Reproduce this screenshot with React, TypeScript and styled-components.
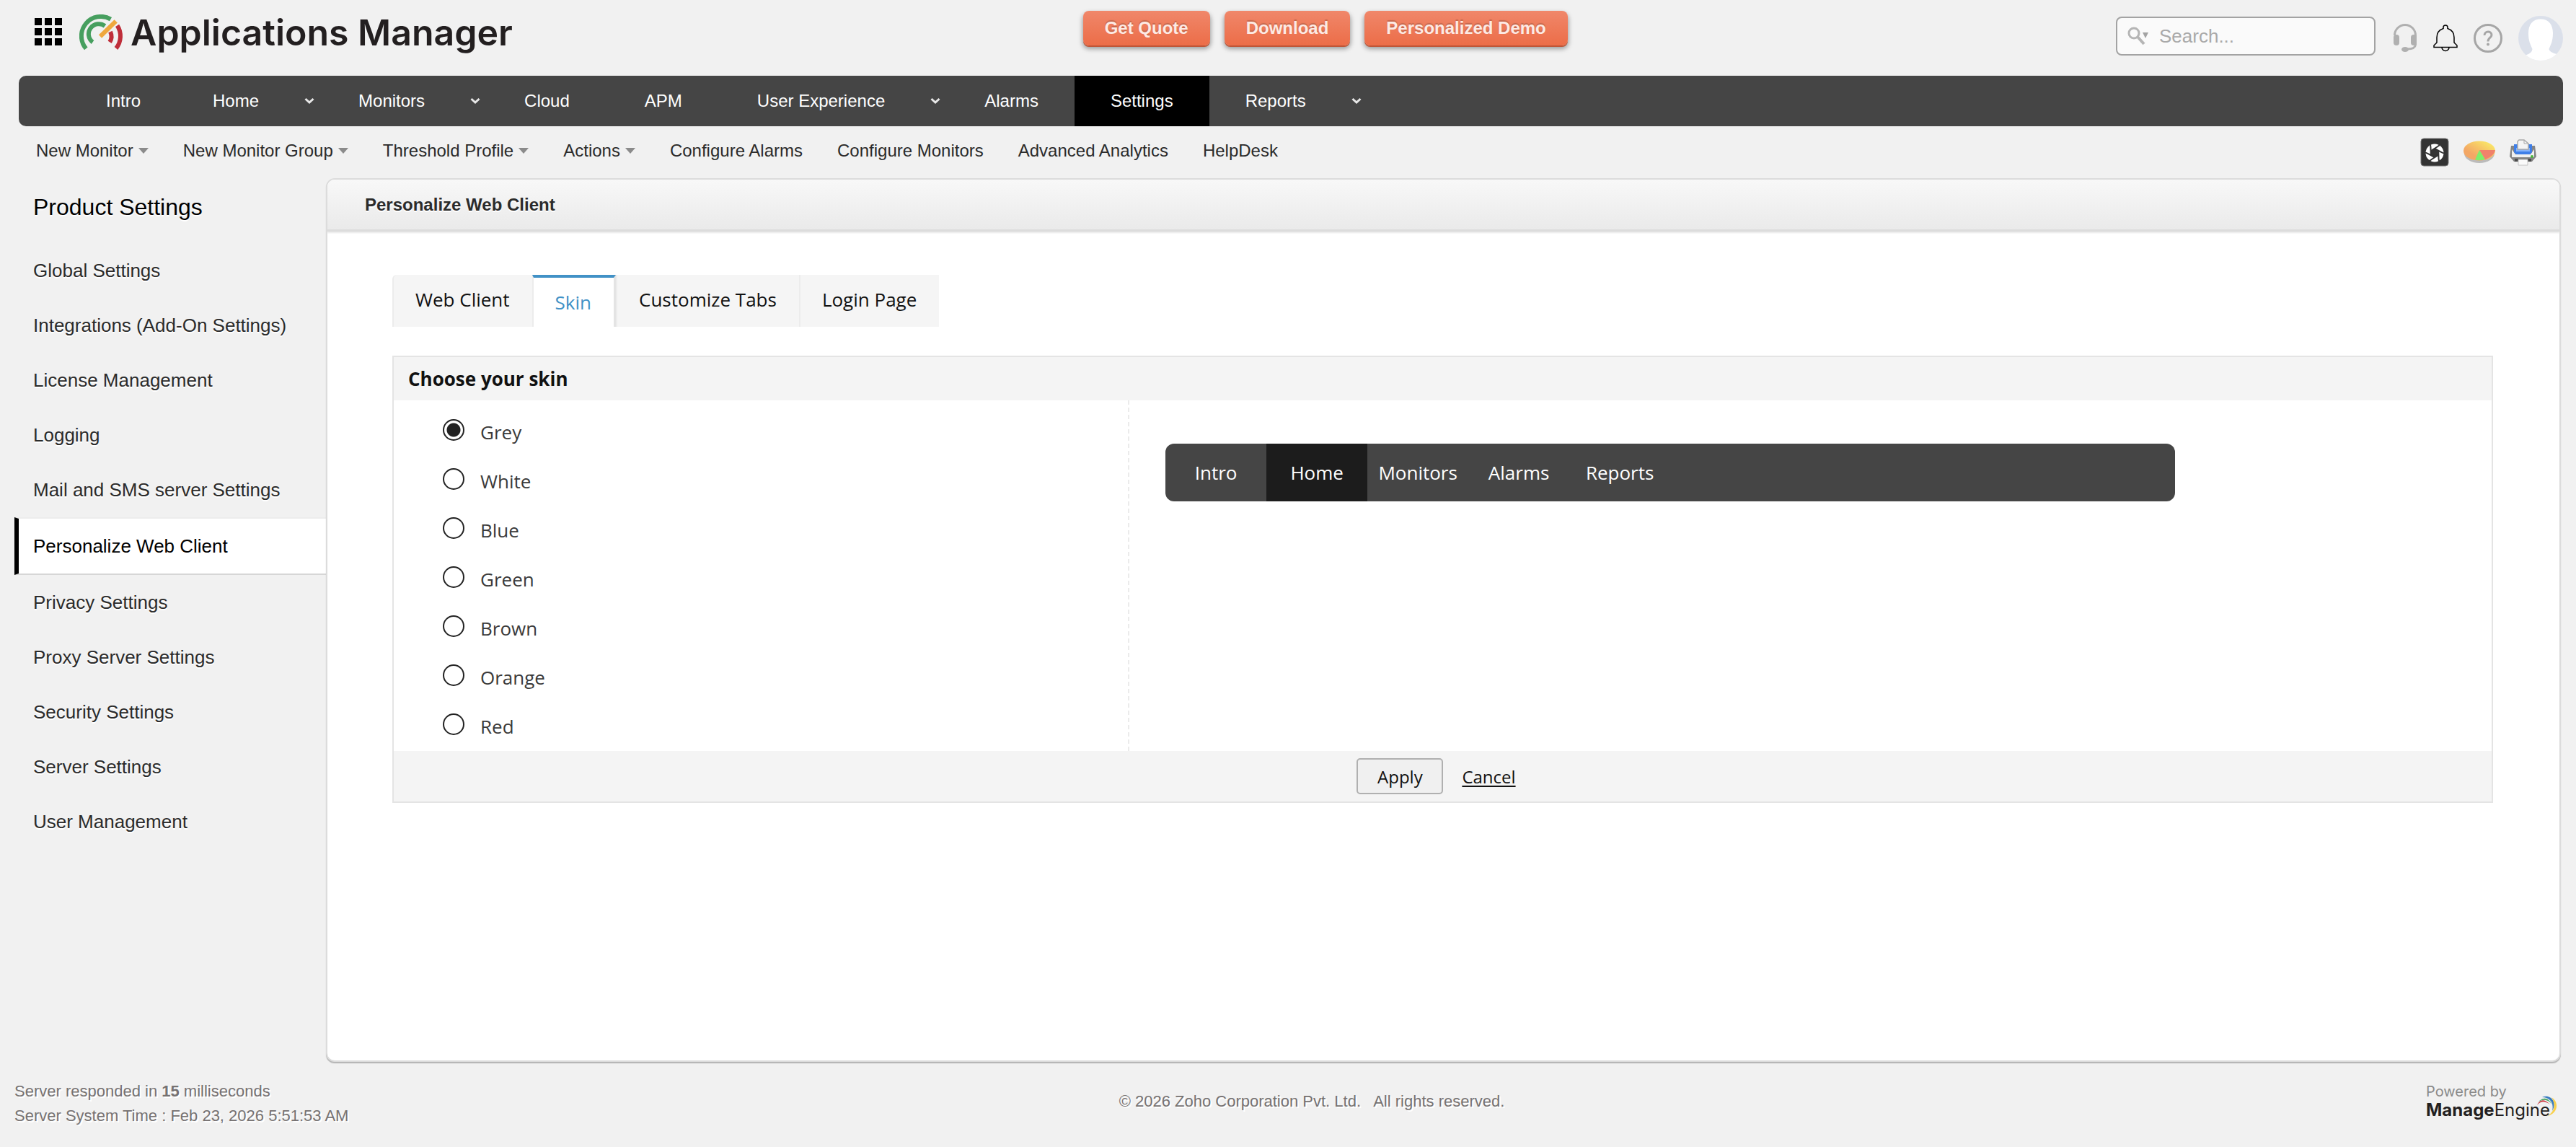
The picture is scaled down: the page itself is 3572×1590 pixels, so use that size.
import React, { useState } from "react";
import styled, { createGlobalStyle, css } from "styled-components";

const sans = `"Liberation Sans", Arial, Helvetica, sans-serif`;
const open = `"Open Sans", "Noto Sans", sans-serif`;
const brand = `Inter, "Open Sans", sans-serif`;

const GlobalStyle = createGlobalStyle`
  *, *::before, *::after { box-sizing: border-box; }
  body { margin: 0; background: #f1f1f1; color: #2b2b2b; font-family: ${sans}; font-size: 24px; }
  a { color: inherit; text-decoration: none; }
  button { font: inherit; color: inherit; cursor: pointer; }
  ul { list-style: none; margin: 0; padding: 0; }
  svg { display: block; }
`;

const Page = styled.div`
  min-height: 100vh;
  display: flex;
  flex-direction: column;
`;

/* ---------- header ---------- */

const Header = styled.header`
  display: grid;
  grid-template-columns: 42% auto 1fr;
  align-items: start;
  height: 105px;
  padding-right: 18px;
`;

const HeaderLeft = styled.div`
  display: flex;
  align-items: flex-start;
  padding: 20px 0 0 48px;
`;

const IconButton = styled.button`
  display: block;
  padding: 0;
  border: 0;
  background: none;
`;

const AppsButton = styled(IconButton)`
  padding-top: 5px;
  margin-right: 24px;
`;

const ProductName = styled.h1`
  margin: 0 0 0 10px;
  font: 600 50px/50px ${brand};
  color: #231f20;
  white-space: nowrap;
`;

const PromoBar = styled.div`
  display: flex;
  gap: 20px;
  padding-top: 15px;
  margin-left: 9px;
`;

const PromoButton = styled.a`
  height: 48px;
  padding: 0 30px;
  border-radius: 8px;
  background: linear-gradient(#f0876a, #ec6d48);
  box-shadow: 0 2px 0 #bf5537, 0 4px 6px 1px rgba(0, 0, 0, 0.35);
  color: #fdeae4;
  font-weight: bold;
  line-height: 48px;
  text-shadow: 0 -2px 1px #c4684e;
  white-space: nowrap;
`;

const Tools = styled.div`
  display: flex;
  justify-content: flex-end;
  align-items: center;
  padding-top: 22px;
`;

const SearchBox = styled.label`
  display: flex;
  align-items: center;
  gap: 14px;
  width: 360px;
  height: 54px;
  margin: 0 24px 6px 0;
  padding: 0 14px;
  border: 2px solid #a3a3a3;
  border-radius: 8px;
  background: #fafafa;
`;

const SearchInput = styled.input`
  flex: 1;
  min-width: 0;
  padding: 0;
  border: 0;
  outline: 0;
  background: none;
  font: 26px/32px ${sans};
  &::placeholder { color: #a9a9a9; opacity: 1; }
`;

const ToolIcons = styled.div`
  display: flex;
  align-items: center;
  gap: 22px;
`;

/* ---------- navigation ---------- */

const MainNav = styled.nav`
  margin: 0 18px 0 26px;
  height: 70px;
  padding-left: 71px;
  border-radius: 10px;
  background: #454545;
  color: #fff;
`;

const MainList = styled.ul`
  display: flex;
  height: 100%;
`;

const MainItem = styled.li<{ $roomy?: boolean }>`
  display: flex;
  ${(p) => p.$roomy && css`min-width: 160px; justify-content: center;`}
`;

const MainLink = styled.a<{ $active?: boolean }>`
  padding: 0 50px;
  line-height: 70px;
  background: ${(p) => (p.$active ? "#000" : "transparent")};
`;

const ChevronButton = styled(IconButton)`
  width: 38px;
  padding-left: 12px;
`;

const SubNav = styled.nav`
  display: flex;
  justify-content: space-between;
  align-items: center;
  height: 72px;
  padding: 0 55px 0 50px;
`;

const SubList = styled.ul`
  display: flex;
  gap: 48px;
  padding-bottom: 4px;
  line-height: 32px;
`;

const SubLink = styled.a`
  display: flex;
  align-items: center;
  gap: 7px;
`;

const Caret = styled.span`
  border: 7px solid transparent;
  border-top: 8px solid #8b8b8b;
  border-bottom: 0;
`;

const SubIcons = styled.div`
  display: flex;
  align-items: center;
  gap: 20px;
`;

/* ---------- body ---------- */

const Body = styled.div`
  flex: 1;
  display: flex;
  padding: 0 21px 0 20px;
`;

const Sidebar = styled.aside`
  width: 432px;
  text-shadow: 0 2px 0 #fff;
`;

const SidebarTitle = styled.h2`
  margin: 0 0 10px;
  padding-left: 26px;
  font: 32px/80px ${sans};
  color: #000;
`;

const SideLink = styled.a<{ $active?: boolean }>`
  display: block;
  padding-left: 26px;
  font-size: 26px;
  line-height: 76px;
  ${(p) =>
    p.$active &&
    css`
      padding-left: 20px;
      border: solid;
      border-width: 2px 0 2px 6px;
      border-color: #ececec #fff #d6d6d6 #000;
      background: #fff;
      color: #000;
    `}
`;

const Panel = styled.main`
  flex: 1;
  min-width: 0;
  border: 2px solid #dcdcdc;
  border-radius: 12px;
  background: #fff;
  box-shadow: 0 2px 1px #b5b5b5;
  overflow: hidden;
`;

const PanelTitle = styled.h2`
  margin: 0;
  height: 72px;
  padding-left: 52px;
  border-bottom: 3px solid #dcdcdc;
  box-shadow: 0 2px 2px #e8e8e8;
  background: linear-gradient(#f8f8f8, #eaeaea);
  font: bold 24px/70px ${sans};
  text-shadow: 0 2px 0 #fff;
`;

const PanelContent = styled.div`
  padding: 60px 92px 90px 90px;
  font-family: ${open};
  font-size: 26px;
`;

const Tabs = styled.div`
  display: flex;
  height: 72px;
  margin-bottom: 40px;
`;

const Tab = styled.button<{ $active?: boolean }>`
  display: flex;
  align-items: center;
  padding: 0 31px 4px 30px;
  border: 0;
  border-left: 2px solid #ececec;
  background: #f5f5f5;
  color: #111;
  &:first-child { border-top-left-radius: 6px; }
  ${(p) =>
    p.$active &&
    css`
      padding-bottom: 0;
      border-top: 4px solid #4191c6;
      border-right: 3px solid #e4e4e4;
      background: #fff;
      color: #4191c6;
    `}
`;

const Card = styled.form`
  border: 2px solid #e4e4e4;
`;

const CardTitle = styled.h3`
  margin: 0;
  padding-left: 20px;
  background: #f4f4f4;
  color: #111;
  font: bold 26px/60px ${open};
`;

const CardBody = styled.div`
  display: flex;
`;

const Choices = styled.div`
  width: 35%;
  padding: 10px 0 0 68px;
`;

const Choice = styled.label`
  display: flex;
  align-items: center;
  gap: 22px;
  height: 68px;
  color: #3a3a3a;
`;

const Radio = styled.input`
  appearance: none;
  width: 30px;
  height: 30px;
  margin: 0 0 6px;
  border: 2px solid #222;
  border-radius: 50%;
  background: #fff;
  &:checked { background: radial-gradient(circle, #222 9px, #fff 10px); }
`;

const PreviewPane = styled.div`
  flex: 1;
  padding: 60px 50px;
  border-left: 2px dashed #ebebeb;
`;

const Preview = styled.div`
  display: flex;
  max-width: 1400px;
  border-radius: 12px;
  background: #454545;
  color: #fff;
  line-height: 80px;
  overflow: hidden;
`;

const PreviewTab = styled.span<{ $active?: boolean }>`
  width: 140px;
  text-align: center;
  background: ${(p) => (p.$active ? "#1c1c1c" : "transparent")};
`;

const Actions = styled.div`
  display: flex;
  justify-content: center;
  align-items: center;
  gap: 26px;
  height: 70px;
  padding-right: 18px;
  background: #f4f4f4;
  color: #111;
  font-size: 24px;
`;

const ApplyButton = styled.button`
  width: 120px;
  height: 50px;
  padding: 0;
  border: 2px solid #b0b0b0;
  border-radius: 5px;
  background: #f0f0f0;
`;

const CancelLink = styled.a`
  text-decoration: underline;
  text-decoration-thickness: 2px;
  text-underline-offset: 3px;
`;

/* ---------- footer ---------- */

const Footer = styled.footer`
  display: grid;
  grid-template-columns: 1fr auto 1fr;
  height: 118px;
  padding: 24px 24px 0 20px;
  font-size: 22px;
  line-height: 34px;
  color: #767272;
  text-shadow: 2px 2px 0 #fff;
`;

const Copyright = styled.p`
  margin: 0;
  padding-top: 14px;
  padding-left: 70px;
  white-space: pre;
`;

const PoweredBy = styled.a`
  position: relative;
  justify-self: end;
  width: 184px;
  padding-top: 4px;
  font: 20px/26px ${brand};
  color: #8a8a8a;
  text-shadow: none;
`;

const EngineName = styled.span`
  display: block;
  font-size: 24px;
  color: #231f20;
`;

const Swoosh = styled.svg`
  position: absolute;
  right: 2px;
  top: 23px;
`;

/* ---------- drawings ---------- */

const AppsIcon = () => (
  <svg width="38" height="38" viewBox="0 0 38 38" aria-hidden="true">
    {[0, 14, 28].map((y) => [0, 14, 28].map((x) => <rect key={`${x}-${y}`} x={x} y={y} width="10" height="10" />))}
  </svg>
);

const Gauge = () => (
  <svg width="61" height="50" viewBox="0 0 61 50" fill="none" strokeWidth="6" aria-hidden="true">
    <path stroke="#479f5f" d="M9.3 47.4A27 27 0 0 1 43.5 6.6M18.5 38.5A14 14 0 0 1 35.5 16" />
    <path stroke="#bf2e3a" d="M52.6 15.3A27 27 0 0 1 51 47M43 24A15 15 0 0 1 42.2 38.4" />
    <path stroke="#efa83e" d="M29 30.5L50.7 9.3" />
  </svg>
);

const SearchIcon = () => (
  <svg width="30" height="26" viewBox="0 0 30 26" aria-hidden="true">
    <circle cx="9" cy="9" r="7" fill="none" stroke="#b5b5b5" strokeWidth="3" />
    <path d="M14 14l9 10" stroke="#b5b5b5" strokeWidth="4" />
    <path d="M21 8h8l-4 8z" fill="#a3a3a3" />
  </svg>
);

const Headset = () => (
  <svg width="34" height="40" viewBox="0 0 34 40" aria-hidden="true">
    <path d="M2.5 16A14.5 14.5 0 0 1 31.5 16V29Q31 35 20 35" fill="none" stroke="#b0b0b0" strokeWidth="3" />
    <rect x="1" y="15" width="8" height="15" rx="4" fill="#b0b0b0" />
    <rect x="25" y="15" width="8" height="15" rx="4" fill="#b0b0b0" />
    <ellipse cx="17" cy="35.5" rx="5" ry="3.5" fill="#b0b0b0" />
  </svg>
);

const Bell = () => (
  <svg width="34" height="38" viewBox="0 0 34 38" fill="none" stroke="#000" strokeWidth="1.5" aria-hidden="true">
    <path d="M14 5.5V4A3 3 0 0 1 20 4V5.5C26 7.5 29 12 29 18V25L33 29V31.5H1V29L5 25V18C5 12 8 7.5 14 5.5Z" />
    <path d="M12 31.5A5 5 0 0 0 22 31.5" />
  </svg>
);

const Help = () => (
  <svg width="40" height="40" viewBox="0 0 40 40" fill="none" stroke="#a6a6a6" aria-hidden="true">
    <circle cx="20" cy="20" r="18.5" strokeWidth="3" />
    <path d="M15 16C15 9.5 25 9.5 25 15.5C25 19.5 20 19 20 24.5" strokeWidth="3" />
    <circle cx="20" cy="28.5" r="2" fill="#a6a6a6" stroke="none" />
  </svg>
);

const Avatar = () => (
  <svg width="62" height="62" viewBox="0 0 62 62" aria-hidden="true">
    <clipPath id="avatar-round"><circle cx="31" cy="31" r="31" /></clipPath>
    <g clipPath="url(#avatar-round)">
      <rect width="62" height="62" fill="#dbe0ea" />
      <path fill="#fff" d="M31 4.5C42 4.5 48 12 48 24C48 35 45 40 42.5 46Q43 51 55 53.5L62 58V62H0V58L10 54.5Q19 52 19.5 46C17 40 14 35 14 24C14 12 20 4.5 31 4.5Z" />
    </g>
  </svg>
);

const Chevron = () => (
  <svg width="16" height="10" viewBox="0 0 16 10" aria-hidden="true">
    <path d="M2.5 2L8 7L13.5 2" fill="none" stroke="#e8e8e8" strokeWidth="3" />
  </svg>
);

const Shutter = () => (
  <svg width="40" height="40" viewBox="0 0 40 40" aria-hidden="true">
    <rect x="1" y="1" width="38" height="38" rx="4" fill="#333" stroke="#777" />
    <circle cx="20" cy="21" r="12.5" fill="#fff" />
    <path d="M20 15L25.2 18V24L20 27L14.8 24V18Z" fill="#333" />
    <g stroke="#333" strokeWidth="2">
      {[0, 60, 120, 180, 240, 300].map((a) => (
        <path key={a} d="M14.8 18L24 12.3L27 10" transform={`rotate(${a} 20 21)`} />
      ))}
    </g>
  </svg>
);

const Pie = () => (
  <svg width="44" height="32" viewBox="0 0 44 32" aria-hidden="true">
    <defs>
      <linearGradient id="pie-top" x1="0" y1="1" x2="1" y2="0">
        <stop offset="0.3" stopColor="#f3a765" />
        <stop offset="1" stopColor="#fbf468" />
      </linearGradient>
    </defs>
    <ellipse cx="22" cy="17.5" rx="21" ry="13.5" fill="#bbb" />
    <ellipse cx="22" cy="14" rx="22" ry="13.5" fill="url(#pie-top)" />
    <path d="M22 13H44Q43 21 30 26Z" fill="#f0826b" />
    <path d="M22 13L30 26Q23 28 16 26.5Z" fill="#7eee6c" />
  </svg>
);

const Printer = () => (
  <svg width="37" height="37" viewBox="0 0 37 37" aria-hidden="true">
    <path d="M2 9H6V16H31V9H35L37 24L31 31H6L0 24Z" fill="#858585" />
    <path d="M3 14L8 21H29L34 14V25H3Z" fill="#f0f0f0" />
    <path d="M6 7H31V18L28 21H9L6 18Z" fill="#3f7fe8" />
    <path d="M9 12H28V17H9Z" fill="#85b3fa" />
    <path d="M11 3L13 1H20L26 6V14H11Z" fill="#f4f4f4" stroke="#a8a8a8" strokeWidth="1.5" />
    <path d="M20 1V6H26" fill="none" stroke="#a8a8a8" />
    <path d="M7 27H30V31H7Z" fill="#4d4d4d" />
    <path d="M12 28H25V36H12Z" fill="#fafafa" stroke="#c4c4c4" />
    <circle cx="31" cy="24" r="2" fill="#49b53c" />
  </svg>
);

/* ---------- content ---------- */

const mainNav = [
  { label: "Intro" },
  { label: "Home", menu: true },
  { label: "Monitors", menu: true },
  { label: "Cloud" },
  { label: "APM", roomy: true },
  { label: "User Experience", menu: true },
  { label: "Alarms" },
  { label: "Settings", active: true },
  { label: "Reports", menu: true },
];

const subNav = [
  { label: "New Monitor", menu: true },
  { label: "New Monitor Group", menu: true },
  { label: "Threshold Profile", menu: true },
  { label: "Actions", menu: true },
  { label: "Configure Alarms" },
  { label: "Configure Monitors" },
  { label: "Advanced Analytics" },
  { label: "HelpDesk" },
];

const settings = [
  "Global Settings",
  "Integrations (Add-On Settings)",
  "License Management",
  "Logging",
  "Mail and SMS server Settings",
  "Personalize Web Client",
  "Privacy Settings",
  "Proxy Server Settings",
  "Security Settings",
  "Server Settings",
  "User Management",
];

const skins = ["Grey", "White", "Blue", "Green", "Brown", "Orange", "Red"];

export default function App() {
  const [skin, setSkin] = useState("Grey");

  return (
    <Page>
      <GlobalStyle />
      <Header>
        <HeaderLeft>
          <AppsButton type="button" aria-label="Apps"><AppsIcon /></AppsButton>
          <Gauge />
          <ProductName>Applications Manager</ProductName>
        </HeaderLeft>
        <PromoBar>
          <PromoButton href="#quote">Get Quote</PromoButton>
          <PromoButton href="#download">Download</PromoButton>
          <PromoButton href="#demo">Personalized Demo</PromoButton>
        </PromoBar>
        <Tools>
          <SearchBox>
            <SearchIcon />
            <SearchInput type="text" placeholder="Search..." aria-label="Search" />
          </SearchBox>
          <ToolIcons>
            <IconButton type="button" aria-label="Support"><Headset /></IconButton>
            <IconButton type="button" aria-label="Alerts"><Bell /></IconButton>
            <IconButton type="button" aria-label="Help"><Help /></IconButton>
            <IconButton type="button" aria-label="Profile"><Avatar /></IconButton>
          </ToolIcons>
        </Tools>
      </Header>

      <MainNav aria-label="Main">
        <MainList>
          {mainNav.map((item) => (
            <MainItem key={item.label} $roomy={item.roomy}>
              <MainLink href="#" $active={item.active}>{item.label}</MainLink>
              {item.menu && (
                <ChevronButton type="button" aria-label={`${item.label} menu`}><Chevron /></ChevronButton>
              )}
            </MainItem>
          ))}
        </MainList>
      </MainNav>

      <SubNav aria-label="Shortcuts">
        <SubList>
          {subNav.map((item) => (
            <li key={item.label}>
              <SubLink href="#">{item.label}{item.menu && <Caret />}</SubLink>
            </li>
          ))}
        </SubList>
        <SubIcons>
          <IconButton type="button" aria-label="Snapshot"><Shutter /></IconButton>
          <IconButton type="button" aria-label="Reports"><Pie /></IconButton>
          <IconButton type="button" aria-label="Print"><Printer /></IconButton>
        </SubIcons>
      </SubNav>

      <Body>
        <Sidebar>
          <SidebarTitle>Product Settings</SidebarTitle>
          <ul>
            {settings.map((name) => (
              <li key={name}>
                <SideLink href="#" $active={name === "Personalize Web Client"}>{name}</SideLink>
              </li>
            ))}
          </ul>
        </Sidebar>

        <Panel>
          <PanelTitle>Personalize Web Client</PanelTitle>
          <PanelContent>
            <Tabs role="tablist">
              {["Web Client", "Skin", "Customize Tabs", "Login Page"].map((name) => (
                <Tab key={name} type="button" role="tab" aria-selected={name === "Skin"} $active={name === "Skin"}>
                  {name}
                </Tab>
              ))}
            </Tabs>
            <Card onSubmit={(e: React.FormEvent) => e.preventDefault()}>
              <CardTitle>Choose your skin</CardTitle>
              <CardBody>
                <Choices role="radiogroup" aria-label="Skin">
                  {skins.map((name) => (
                    <Choice key={name}>
                      <Radio type="radio" name="skin" checked={skin === name} onChange={() => setSkin(name)} />
                      {name}
                    </Choice>
                  ))}
                </Choices>
                <PreviewPane>
                  <Preview>
                    {["Intro", "Home", "Monitors", "Alarms", "Reports"].map((name) => (
                      <PreviewTab key={name} $active={name === "Home"}>{name}</PreviewTab>
                    ))}
                  </Preview>
                </PreviewPane>
              </CardBody>
              <Actions>
                <ApplyButton type="submit">Apply</ApplyButton>
                <CancelLink href="#">Cancel</CancelLink>
              </Actions>
            </Card>
          </PanelContent>
        </Panel>
      </Body>

      <Footer>
        <div>
          <div>Server responded in <b>15</b> milliseconds</div>
          <div>Server System Time : Feb 23, 2026 5:51:53 AM</div>
        </div>
        <Copyright>{"© 2026 Zoho Corporation Pvt. Ltd.\u00a0\u00a0 All rights reserved."}</Copyright>
        <PoweredBy href="#">
          Powered by
          <EngineName><b>Manage</b>Engine</EngineName>
          <Swoosh width="29" height="29" viewBox="0 0 29 29" aria-hidden="true">
            <path fill="#c9353c" d="M1 13Q7 0 19 12Q8 4 1 13Z" />
            <path fill="#4aa564" d="M3 8Q14-2 22 12Q14 2 3 8Z" />
            <path fill="#3a7cc0" d="M8 2C18-3 30 7 22 21C25 8 17 2 8 2Z" />
            <path fill="#f8d04c" d="M21 2C33 10 29 25 15 28C26 22 27 12 21 2Z" />
          </Swoosh>
        </PoweredBy>
      </Footer>
    </Page>
  );
}
